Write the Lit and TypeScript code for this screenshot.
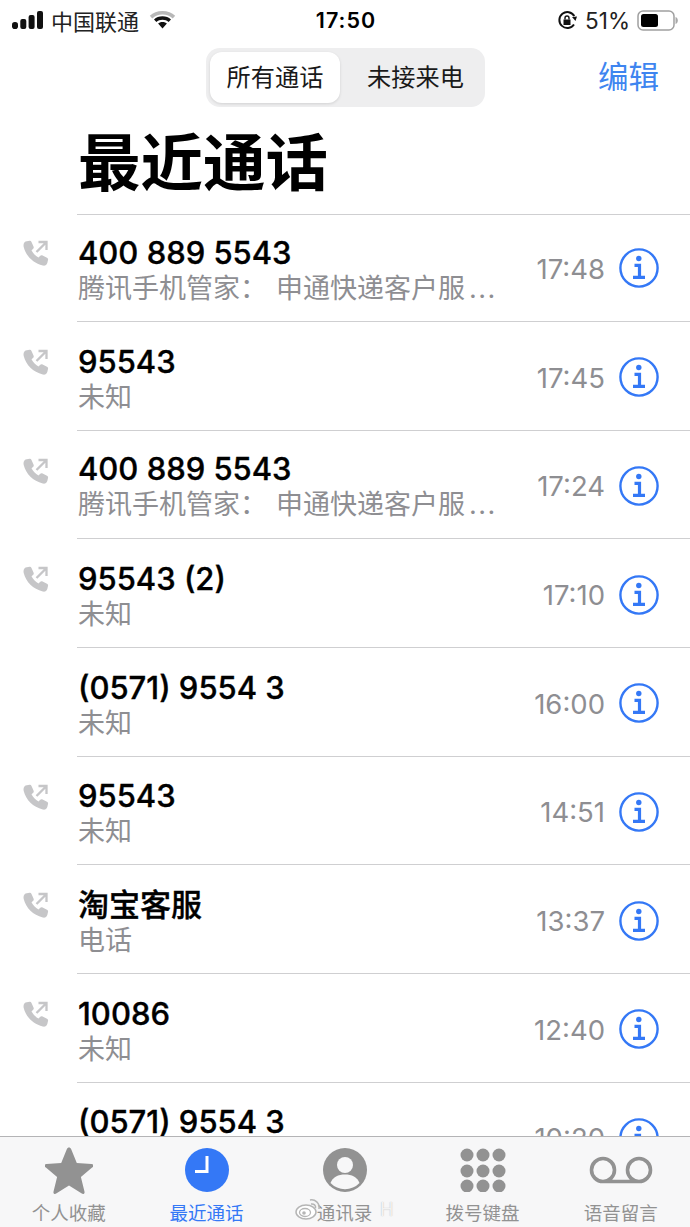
import { LitElement, html, css, svg } from "lit";
import { customElement } from "lit/decorators.js";

const LONG = "申通快递客户服";
const rows = [
  { name: "400 889 5543", pre: "腾讯手机管家", sub: LONG, time: "17:48", out: true },
  { name: "95543", sub: "未知", time: "17:45", out: true },
  { name: "400 889 5543", pre: "腾讯手机管家", sub: LONG, time: "17:24", out: true },
  { name: "95543 (2)", sub: "未知", time: "17:10", out: true },
  { name: "(0571) 9554 3", sub: "未知", time: "16:00", out: false },
  { name: "95543", sub: "未知", time: "14:51", out: true },
  { name: "淘宝客服", sub: "电话", time: "13:37", out: true },
  { name: "10086", sub: "未知", time: "12:40", out: true },
  { name: "(0571) 9554 3", sub: "未知", time: "10:20", out: false },
];

const phoneIcon = html`<svg class="phone" viewBox="0 0 26 26" width="26" height="26">
  <path fill="#c6c6c8" d="M2.500 1.500 6.500.8C7.500.6 8 1 8.500 2l2 4.500c.5 1 .3 1.800-.5 2.500L8.500 10.300c1.300 2.700 4 5.700 7 7.200L17 16c.8-.8 1.600-1 2.600-.5l4.400 2.300c1 .5 1.300 1.200 1 2.200l-.7 3c-.5 2-2.500 3-4.500 2.500C10 23 3 16 .7 7 .2 4.500.8 2.500 2.500 1.500z"/>
  <path fill="none" stroke="#c6c6c8" stroke-width="2.300" d="M13.500 12 22.500 3M15.500 2h8v8"/>
</svg>`;

const infoIcon = html`<svg class="info" viewBox="0 0 40 40" width="40" height="40">
  <circle cx="20" cy="20" r="18.600" fill="none" stroke="#3478f6" stroke-width="2.400"/>
  <circle cx="19.800" cy="10.500" r="2.700" fill="#3478f6"/>
  <path fill="none" stroke="#3478f6" stroke-width="3.200" d="M15.500 17.300h5v11.500M14 29.300h12"/>
</svg>`;

@customElement("app-root")
export class AppRoot extends LitElement {
  static styles = css`
    :host {
      display: block;
      width: 690px;
      height: 1227px;
      overflow: hidden;
      background: #fff;
      font-family: Inter, "Noto Sans CJK SC", sans-serif;
      color: #000;
    }
    .page {
      display: flex;
      flex-direction: column;
      height: 1227px;
    }
    .status {
      height: 48px;
      flex: none;
      display: grid;
      grid-template-columns: 1fr auto 1fr;
      align-items: center;
      padding: 0 12px 8px 12px;
      box-sizing: border-box;
      font-size: 22px;
    }
    .st-left {
      display: flex;
      align-items: center;
      gap: 8px;
      color: #222;
    }
    .carrier { font-size: 22px; margin-right: 2px; }
    .time { font-size: 21.500px; font-weight: 600; letter-spacing: 1px; padding-left: 2px; }
    .st-right {
      display: flex;
      align-items: center;
      justify-content: flex-end;
      gap: 6px;
      color: #222;
    }
    .pct { font-size: 22.500px; margin: 0 1px 0 1px; }
    .nav {
      height: 59px;
      flex: none;
      position: relative;
      display: flex;
      justify-content: center;
      padding-left: 1px;
    }
    .seg {
      width: 279px;
      height: 59px;
      box-sizing: border-box;
      background: #eeeeef;
      border-radius: 14px;
      padding: 4px;
      display: flex;
    }
    .seg div {
      flex: 1;
      display: flex;
      align-items: center;
      justify-content: center;
      font-size: 24.200px;
      color: #1a1a1a;
      padding: 0 0 4px 10px;
    }
    .seg .on {
      flex: none;
      width: 130px;
      background: #fff;
      border-radius: 12px;
      box-shadow: 0 1px 3px rgba(0, 0, 0, 0.12);
      padding-left: 0;
    }
    .edit {
      position: absolute;
      right: 31px;
      top: 8px;
      font-size: 30.500px;
      color: #3e85f0;
      line-height: 42px;
    }
    h1 {
      margin: 0;
      flex: none;
      height: 107px;
      box-sizing: border-box;
      padding: 16px 0 0 78px;
      font-size: 62.500px;
      line-height: 72px;
      font-weight: 700;
      font-family: "Noto Sans CJK SC", sans-serif;
    }
    .list {
      flex: 1;
      min-height: 0;
      overflow: hidden;
    }
    .row {
      height: 108.670px;
      box-sizing: border-box;
      display: flex;
      position: relative;
      align-items: center;
      padding: 5px 0 0 78px;
    }
    .row:first-child {
      height: 107px;
      padding-top: 2px;
    }
    .row::before {
      content: "";
      position: absolute;
      left: 77px;
      right: 0;
      top: 0;
      height: 1px;
      background: #cfcfd1;
    }
    .phone {
      position: absolute;
      left: 23px;
      top: 28px;
    }
    .row:first-child .phone { top: 26px; }
    .txt {
      flex: 1;
      min-width: 0;
      padding-top: 3px;
      transform: translateY(-1px);
    }
    .row:first-child .txt { transform: translateY(0); }
    .name {
      font-size: 31px;
      font-weight: 500;
      -webkit-text-stroke: 0.35px #000;
      line-height: 38px;
      white-space: nowrap;
      height: 35px;
      color: #000;
    }
    .sub {
      font-size: 27px;
      line-height: 36px;
      color: #8e8e92;
      white-space: nowrap;
      font-family: "Noto Sans CJK SC", sans-serif;
    }
    .colon { margin-right: 9px; }
    .dots {
      font-family: Inter, sans-serif;
      font-size: 27px;
      letter-spacing: 1.500px;
      margin-left: 4px;
    }
    .when {
      font-size: 27.500px;
      color: #8e8e92;
      margin-right: 14px;
      flex: none;
    }
    .info {
      margin-right: 31px;
      flex: none;
      margin-top: -1px;
    }
    .tabs {
      position: relative;
      height: 91px;
      flex: none;
      box-sizing: border-box;
      background: #f7f7f8;
      border-top: 1.500px solid #b4b4b6;
      display: grid;
      grid-template-columns: 137.500px 138px 138px 138px 138.500px;
    }
    .tab {
      display: flex;
      flex-direction: column;
      align-items: center;
      color: #929292;
      font-size: 18.500px;
      font-family: "Noto Sans CJK SC", sans-serif;
    }
    .tab.active { color: #3478f6; }
    .ti {
      height: 62px;
      display: flex;
      align-items: center;
      justify-content: center;
      padding-top: 4px;
      box-sizing: border-box;
    }
    .tl { line-height: 26px; }
    .mark {
      position: absolute;
      left: 295px;
      top: 60px;
      display: flex;
      align-items: center;
      gap: 1px;
      color: rgba(255, 255, 255, 0.85);
      font-size: 18px;
      text-shadow: 0 0 1px rgba(120, 120, 120, 0.6);
    }
    .mark span { padding-left: 58px; }
  `;

  render() {
    return html`<div class="page">
      <div class="status">
        <div class="st-left">
          <svg width="31" height="18" viewBox="0 0 31 18">
            <rect x="0" y="11" width="6" height="7" rx="2.800" fill="#111"/>
            <rect x="8.300" y="8" width="6" height="10" rx="2" fill="#111"/>
            <rect x="16.600" y="4" width="6" height="14" rx="2" fill="#111"/>
            <rect x="25" y="0" width="6" height="18" rx="2" fill="#111"/>
          </svg>
          <span class="carrier">中国联通</span>
          <svg width="27" height="20" viewBox="0 0 27 20">
            <path fill="#b8b8b8" d="M13.500 1C8.500 1 4 2.800 .8 5.800l2.500 2.700C6 6 9.600 4.600 13.500 4.600s7.500 1.400 10.200 3.900l2.500-2.700C23 2.800 18.500 1 13.500 1z"/>
            <path fill="#111" d="M13.500 6.200c-3.400 0-6.300 1.200-8.500 3.200l2.400 2.500c1.600-1.400 3.700-2.200 6.100-2.200s4.500.8 6.100 2.200L22 9.400c-2.200-2-5.100-3.200-8.500-3.200zM13.500 12c-1.900 0-3.400.6-4.400 1.600l4.400 4.800 4.400-4.800C16.900 12.600 15.400 12 13.500 12z"/>
          </svg>
        </div>
        <div class="time">17:50</div>
        <div class="st-right">
          <svg width="21" height="21" viewBox="0 0 21 21">
            <path fill="none" stroke="#111" stroke-width="2" d="M17 14.500A8 8 0 1 1 17.300 6"/>
            <path fill="#111" d="M15 7l5 -.5-1.500 4.500zM6.500 9.500h7V15h-7z"/>
            <path fill="none" stroke="#111" stroke-width="1.400" d="M8 9.500V8a2 2 0 0 1 4 0v1.500"/>
          </svg>
          <span class="pct">51%</span>
          <svg width="41" height="21" viewBox="0 0 41 21">
            <rect x="1" y="1" width="36" height="19" rx="5" fill="none" stroke="#a0a0a0" stroke-width="1.500"/>
            <rect x="4" y="4" width="17" height="13" rx="2.500" fill="#000"/>
            <path d="M38.500 7c1.500.4 2.300 1.800 2.300 3.500S40 13.600 38.500 14z" fill="#a8a8a8"/>
          </svg>
        </div>
      </div>
      <div class="nav">
        <div class="seg">
          <div class="on">所有通话</div>
          <div>未接来电</div>
        </div>
        <div class="edit">编辑</div>
      </div>
      <h1>最近通话</h1>
      <div class="list">
        ${rows.map(
          (r) => html`<div class="row">
            ${r.out ? phoneIcon : ""}
            <div class="txt">
              <div class="name">${r.name}</div>
              <div class="sub">${r.pre
                ? html`${r.pre}<span class="colon">：</span>${r.sub}<span class="dots">...</span>`
                : r.sub}</div>
            </div>
            <div class="when">${r.time}</div>
            ${infoIcon}
          </div>`
        )}
      </div>
      <div class="tabs">
        <div class="tab">
          <div class="ti">
            <svg width="48" height="48" viewBox="0 0 48 48"><path fill="#929292" d="M24 1.500c1 0 1.700.6 2.200 1.800l5.600 13.600 14.700 1.100c1.200.1 1.900.7 1.900 1.500 0 .7-.4 1.300-1.300 2L35.900 31l3.500 14.300c.3 1.200.2 2-.5 2.400-.7.400-1.500.2-2.500-.5L24 39.500l-12.400 7.700c-1 .7-1.800.9-2.500.5-.7-.4-.8-1.200-.5-2.400L12.100 31 .9 21.500c-.9-.7-1.300-1.300-1.300-2 0-.8.700-1.400 1.900-1.500l14.700-1.100 5.600-13.600C22.300 2.100 23 1.500 24 1.500z"/></svg>
          </div>
          <div class="tl">个人收藏</div>
        </div>
        <div class="tab active">
          <div class="ti">
            <svg width="44" height="44" viewBox="0 0 44 44"><circle cx="22" cy="22" r="22" fill="#3478f6"/><path fill="none" stroke="#fff" stroke-width="3" d="M22 8v15.500H10"/></svg>
          </div>
          <div class="tl">最近通话</div>
        </div>
        <div class="tab">
          <div class="ti">
            <svg width="44" height="44" viewBox="0 0 44 44"><circle cx="22" cy="22" r="22" fill="#929292"/><circle cx="22" cy="17" r="8" fill="#f7f7f8"/><path fill="#f7f7f8" d="M7.500 35c2-6 8-8.500 14.500-8.500S34.500 29 36.500 35a20 20 0 0 1-29 0z"/></svg>
          </div>
          <div class="tl">通讯录</div>
        </div>
        <div class="tab">
          <div class="ti">
            <svg width="46" height="44" viewBox="0 0 46 44" fill="#929292">
              ${[7, 23, 38].map((y) =>
                [7, 23, 39].map((x) => svg`<circle cx=${x} cy=${y} r="6.500"/>`)
              )}
            </svg>
          </div>
          <div class="tl">拨号键盘</div>
        </div>
        <div class="tab">
          <div class="ti">
            <svg width="64" height="28" viewBox="0 0 64 28"><path fill="none" stroke="#929292" stroke-width="3.600" d="M14 25.500h36M14 25.500a11.500 11.500 0 1 1 0-23 11.500 11.500 0 0 1 0 23zM50 25.500a11.500 11.500 0 1 1 0-23 11.500 11.500 0 0 1 0 23z"/></svg>
          </div>
          <div class="tl">语音留言</div>
        </div>
        <div class="mark">
          <svg width="26" height="24" viewBox="0 0 26 24">
            <ellipse cx="11" cy="15" rx="10" ry="7" fill="#fff" stroke="#b5b5b5" stroke-width="1.500"/>
            <ellipse cx="10" cy="15.500" rx="5.500" ry="4" fill="none" stroke="#b5b5b5" stroke-width="1.300"/>
            <circle cx="9" cy="16" r="1.800" fill="#b5b5b5"/>
            <path fill="none" stroke="#b5b5b5" stroke-width="1.500" d="M15 3c5-1 10 3 9 9M16 7c3-.5 5 1.500 4.500 4"/>
          </svg>
          <span>H</span>
        </div>
      </div>
    </div>`;
  }
}
